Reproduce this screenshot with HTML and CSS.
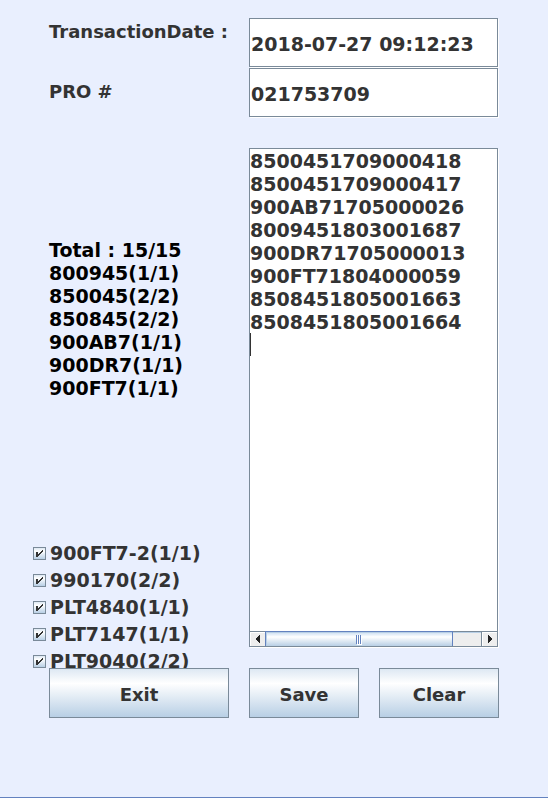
FILE: index.html
```html
<!DOCTYPE html>
<html lang="en">
<head>
<meta charset="utf-8">
<meta name="viewport" content="width=device-width, initial-scale=1">
<title>Transaction</title>
<link rel="stylesheet" href="styles.css">
</head>
<body>
<form class="window">
  <div class="fields">
    <label class="field-label top" for="date">TransactionDate :</label>
    <input class="field" id="date" type="text" value="2018-07-27 09:12:23">
    <label class="field-label middle" for="pro">PRO #</label>
    <input class="field" id="pro" type="text" value="021753709">
  </div>
  <div class="content">
    <div class="counts">
      <ul class="summary">
        <li>Total : 15/15</li>
        <li>800945(1/1)</li>
        <li>850045(2/2)</li>
        <li>850845(2/2)</li>
        <li>900AB7(1/1)</li>
        <li>900DR7(1/1)</li>
        <li>900FT7(1/1)</li>
      </ul>
      <div class="checks">
        <label class="check"><input type="checkbox" checked><svg class="tick" viewBox="0 0 7 7" aria-hidden="true"><path d="M0 2h2v2h1v-1h1v-1h1v-1h1v-1h1v2h-1v1h-1v1h-1v1h-1v1h-1v1h-2z"/></svg>900FT7-2(1/1)</label>
        <label class="check"><input type="checkbox" checked><svg class="tick" viewBox="0 0 7 7" aria-hidden="true"><path d="M0 2h2v2h1v-1h1v-1h1v-1h1v-1h1v2h-1v1h-1v1h-1v1h-1v1h-1v1h-2z"/></svg>990170(2/2)</label>
        <label class="check"><input type="checkbox" checked><svg class="tick" viewBox="0 0 7 7" aria-hidden="true"><path d="M0 2h2v2h1v-1h1v-1h1v-1h1v-1h1v2h-1v1h-1v1h-1v1h-1v1h-1v1h-2z"/></svg>PLT4840(1/1)</label>
        <label class="check"><input type="checkbox" checked><svg class="tick" viewBox="0 0 7 7" aria-hidden="true"><path d="M0 2h2v2h1v-1h1v-1h1v-1h1v-1h1v2h-1v1h-1v1h-1v1h-1v1h-1v1h-2z"/></svg>PLT7147(1/1)</label>
        <label class="check"><input type="checkbox" checked><svg class="tick" viewBox="0 0 7 7" aria-hidden="true"><path d="M0 2h2v2h1v-1h1v-1h1v-1h1v-1h1v2h-1v1h-1v1h-1v1h-1v1h-1v1h-2z"/></svg>PLT9040(2/2)</label>
      </div>
    </div>
    <div class="pane">
      <textarea class="serials" aria-label="Serial numbers" wrap="off" spellcheck="false">8500451709000418
8500451709000417
900AB71705000026
8009451803001687
900DR71705000013
900FT71804000059
8508451805001663
8508451805001664
</textarea>
      <span class="caret"></span>
      <div class="scrollbar">
        <button class="arrow" type="button" aria-label="Scroll left"><svg viewBox="0 0 4 8" aria-hidden="true"><path d="M4 0v8h-1v-1h-1v-1h-1v-1h-1v-2h1v-1h1v-1h1v-1z"/></svg></button>
        <div class="track"><div class="thumb"><span class="grip"></span></div></div>
        <button class="arrow right" type="button" aria-label="Scroll right"><svg viewBox="0 0 4 8" aria-hidden="true"><path d="M0 0v8h1v-1h1v-1h1v-1h1v-2h-1v-1h-1v-1h-1v-1z"/></svg></button>
      </div>
    </div>
  </div>
  <div class="actions">
    <button class="button" type="button">Exit</button>
    <button class="button" type="button">Save</button>
    <button class="button" type="button">Clear</button>
  </div>
</form>
</body>
</html>
```
FILE: styles.css
```css
* {
  box-sizing: border-box;
}

body {
  margin: 0;
  background: #e9effe;
}

body,
button {
  color: #333;
  font: bold 18px/23px Verdana, "DejaVu Sans", sans-serif;
}

.field,
.serials,
.summary,
.check {
  color: #333;
  font: bold 19px/23px Verdana, "DejaVu Sans", sans-serif;
}

.window {
  min-height: 100vh;
  padding: 18px 49px;
  border-bottom: 1px solid #6382bf;
}

.fields,
.content {
  display: grid;
  grid-template-columns: 180fr 249fr;
  column-gap: 20px;
  padding-right: 1px;
}

.fields {
  row-gap: 1px;
  margin-bottom: 31px;
}

.field-label {
  white-space: nowrap;
}

.field-label.top {
  padding-top: 2px;
}

.field-label.middle {
  padding-top: 12px;
}

.field {
  width: 100%;
  min-width: 0;
  height: 49px;
  padding: 2px 1px 0;
  border: 1px solid #7a8a99;
  border-radius: 0;
  outline: 0;
  background: #fff;
  box-shadow: 1px 1px #fff;
}

.counts {
  height: 520px;
  margin-left: -16px;
  padding: 91px 0 0 16px;
  overflow: hidden;
}

.summary {
  margin: 0 0 140px;
  padding: 0;
  color: #000;
  list-style: none;
}

.checks {
  margin-left: -16px;
}

.check {
  display: flex;
  position: relative;
  align-items: center;
  gap: 4px;
  height: 27px;
  white-space: nowrap;
}

.check input {
  appearance: none;
  width: 13px;
  height: 13px;
  margin: 0;
  border: 1px solid #7a8a99;
  background: linear-gradient(#dde8f3, #fff 30%, #b8cfe5);
}

.tick {
  display: none;
  position: absolute;
  left: 3px;
  top: 10px;
  width: 7px;
  height: 7px;
  fill: #333;
  shape-rendering: crispEdges;
}

.check input:checked + .tick {
  display: block;
}

.pane {
  display: flex;
  position: relative;
  flex-direction: column;
  height: 499px;
  border: 1px solid #7a8a99;
  background: #fff;
  box-shadow: 1px 1px #fff;
}

.serials {
  flex: 1;
  width: 100%;
  padding: 1px 0 0;
  border: 0;
  outline: 0;
  background: transparent;
  overflow: hidden;
  resize: none;
}

.caret {
  position: absolute;
  left: 0;
  top: 184px;
  width: 1px;
  height: 23px;
  background: #333;
}

.scrollbar {
  display: flex;
  height: 15px;
  border-top: 1px solid #7a8a99;
  background: #eee;
}

.arrow {
  display: grid;
  place-items: center;
  width: 15px;
  padding: 0;
  border: 0;
  background: #eee;
  box-shadow: inset 1px 1px #fff;
}

.arrow.right {
  width: 16px;
  border-left: 1px solid #7a8a99;
}

.arrow svg {
  width: 4px;
  height: 8px;
  fill: #222;
  shape-rendering: crispEdges;
}

.track {
  flex: 1;
  border-top: 1px solid #b8cfe5;
}

.thumb {
  display: grid;
  place-items: center;
  width: 87%;
  height: 14px;
  margin-top: -1px;
  border: solid #6382bf;
  border-width: 0 1px;
  background: linear-gradient(#c8dcf0, #fff 35%, #b8cfe5);
  box-shadow: inset 1px 1px #b8cfe5, 0 -1px #6382bf;
}

.grip {
  width: 5px;
  height: 9px;
  border: solid #6382bf;
  border-width: 0 1px;
  background: linear-gradient(90deg, #fff 1px, #6382bf 1px 2px, #fff 2px);
  box-shadow: 1px 1px #fff;
}

.actions {
  display: grid;
  grid-template-columns: 18fr 11fr 12fr;
  gap: 20px;
}

.button {
  height: 50px;
  padding: 2px 0 0;
  border: 1px solid #7a8a99;
  border-radius: 0;
  background: linear-gradient(#dde8f3, #fff 30%, #b8cfe5);
}
```
